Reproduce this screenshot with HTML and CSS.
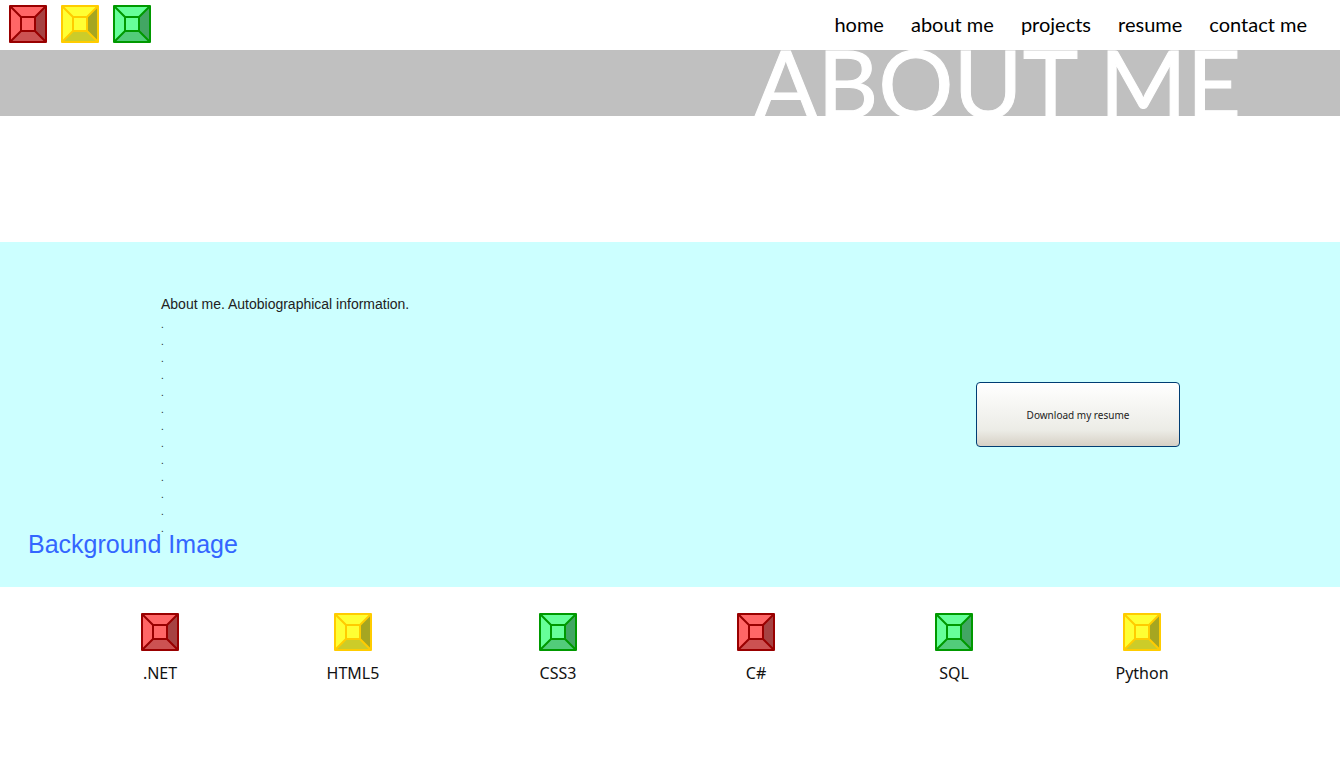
FILE: index.html
```html
<!DOCTYPE html>
<html lang="en">
<head>
<meta charset="utf-8">
<meta name="viewport" content="width=device-width, initial-scale=1">
<title>About me</title>
<link rel="stylesheet" href="styles.css">
</head>
<body>
<svg class="defs" aria-hidden="true">
  <symbol id="gem" viewBox="0 0 38 38">
    <rect class="face" x="1" y="1" width="36" height="36"/>
    <path class="side" d="M37 1V37L26 26V12Z"/>
    <path class="base" d="M1 37H37L26 26H12Z"/>
    <path class="edge" d="M1 1H37V37H1ZM12 12H26V26H12ZM1 1L12 12M37 1L26 12M37 37L26 26M1 37L12 26"/>
  </symbol>
</svg>
<header class="topbar">
  <div class="logo">
    <svg class="gem red"><use href="#gem"/></svg>
    <svg class="gem yellow"><use href="#gem"/></svg>
    <svg class="gem green"><use href="#gem"/></svg>
  </div>
  <nav class="nav">
    <a href="#">home</a>
    <a href="#">about me</a>
    <a href="#">projects</a>
    <a href="#">resume</a>
    <a href="#">contact me</a>
  </nav>
</header>
<main>
  <div class="banner"><h1>ABOUT ME</h1></div>
  <section class="about">
    <div class="bio">
      <p>About me. Autobiographical information.</p>
      <p class="dots">.<br>.<br>.<br>.<br>.<br>.<br>.<br>.<br>.<br>.<br>.<br>.<br>.</p>
    </div>
    <button class="download" type="button">Download my resume</button>
    <span class="caption">Background Image</span>
  </section>
  <ul class="skills">
    <li><svg class="gem red"><use href="#gem"/></svg>.NET</li>
    <li><svg class="gem yellow"><use href="#gem"/></svg>HTML5</li>
    <li><svg class="gem green"><use href="#gem"/></svg>CSS3</li>
    <li><svg class="gem red"><use href="#gem"/></svg>C#</li>
    <li><svg class="gem green"><use href="#gem"/></svg>SQL</li>
    <li><svg class="gem yellow"><use href="#gem"/></svg>Python</li>
  </ul>
</main>
</body>
</html>
```
FILE: styles.css
```css
* { box-sizing: border-box; }
body { margin: 0; background: #fff; color: #000; font-family: "Liberation Sans", Arial, sans-serif; }
h1, p, ul { margin: 0; padding: 0; }

.defs { display: block; width: 0; height: 0; }
.gem { display: block; width: 38px; height: 38px; }
.face { fill: var(--face); }
.side { fill: var(--side); }
.base { fill: var(--base); }
.edge { fill: none; stroke: var(--edge); stroke-width: 2; stroke-linejoin: round; }
.red { --face: #ff6666; --side: #a64242; --base: #cc5252; --edge: #990000; }
.yellow { --face: #ffff33; --side: #a6a621; --base: #cccc29; --edge: #ffcc00; }
.green { --face: #66ff99; --side: #42a663; --base: #52cc7a; --edge: #009900; }

.topbar { display: flex; align-items: center; justify-content: space-between; padding: 5px 33px 7px 9px; }
.logo { display: flex; gap: 14px; }
.nav { display: flex; gap: 27px; font-family: "Gill Sans MT", "Gill Sans", Lato, sans-serif; font-size: 20px; line-height: 24px; }
.nav a { color: #000; text-decoration: none; }

.banner { height: 66px; padding-right: 99px; overflow: hidden; background: #c0c0c0; text-align: right; }
.banner h1 { color: #fff; font-family: "Gill Sans MT", "Gill Sans", Lato, sans-serif; font-size: 94px; font-weight: 400; line-height: 64px; white-space: nowrap; -webkit-text-stroke: 1px #fff; }

.about { position: relative; display: flex; justify-content: space-between; align-items: flex-start; margin-top: 126px; padding: 52px 160px 50px 161px; background: #ccffff; }
.bio { color: #222; font-size: 14px; line-height: 20px; }
.dots { margin-top: 2px; font-size: 10px; line-height: 17px; }
.download { width: 204px; height: 65px; margin-top: 88px; border: 1px solid #003d73; border-radius: 4px; background: linear-gradient(#fff, #ecece6 75%, #d6d0c5); color: #222; font-family: "Noto Sans", sans-serif; font-size: 10px; }
.caption { position: absolute; left: 28px; bottom: 29px; color: #3366ff; font-size: 25px; line-height: 28px; }

.skills { display: grid; grid-template-columns: 186fr 200fr 210fr 186fr 210fr 166fr; padding: 26px 115px 0 67px; list-style: none; }
.skills li { display: flex; flex-direction: column; align-items: center; gap: 12px; color: #111; font-family: "Noto Sans", sans-serif; font-size: 16px; line-height: 20px; }
```
